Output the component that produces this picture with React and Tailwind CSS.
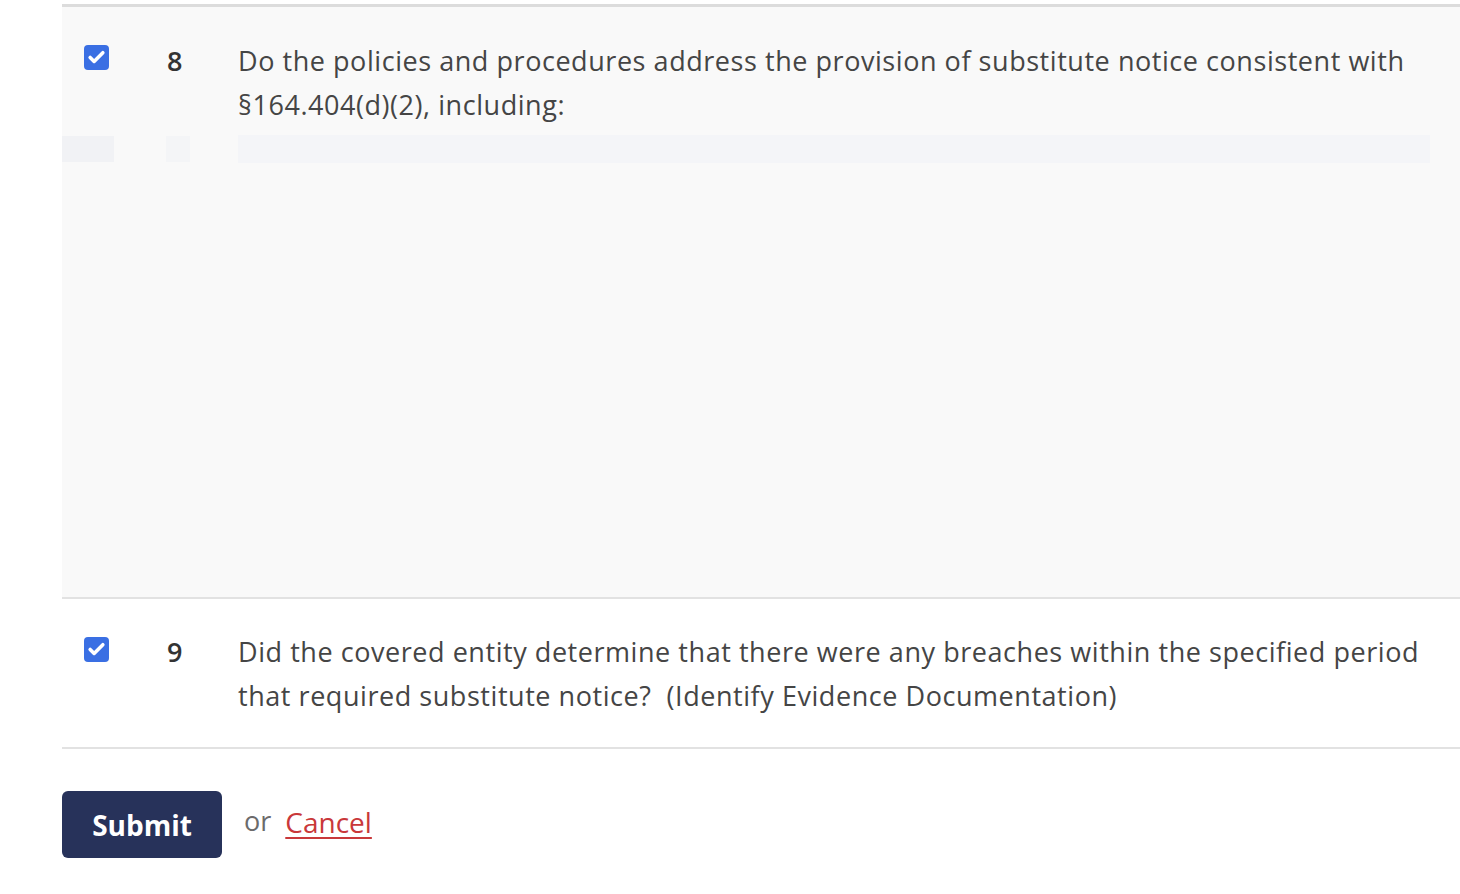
import { Check } from 'lucide-react'

const Box = () => (
  <span className="flex h-[25px] w-[25px] items-center justify-center rounded-[4px] bg-[#3a6fe3]">
    <Check size={19} strokeWidth={4.5} className="text-white" />
  </span>
)

const App = () => {
  return (
    <div className="min-h-[894px] w-[1460px] overflow-hidden bg-white font-['Open_Sans',sans-serif] text-[#454545]">
      <div className="pl-[62px] pt-[4px]">
        <div className="border-t-[3px] border-[#dcdcdc]" />

        {/* question 8 */}
        <div className="h-[592px] border-b-2 border-[#e2e2e2] bg-[#f9f9f9]">
          <div className="flex pt-[32px]">
            <div className="w-[60px] shrink-0 pl-[22px] pt-[6px]">
              <Box />
            </div>
            <div className="w-[116px] shrink-0 pl-[45px] text-[27px] font-semibold leading-[44px] text-[#333]">8</div>
            <p className="w-[1200px] text-[27px] leading-[44px] tracking-[0.55px]">
              Do the policies and procedures address the provision of substitute notice consistent with §164.404(d)(2), including:
            </p>
          </div>
          <div className="mt-[8px] flex items-center">
            <span className="h-[26px] w-[52px] bg-[#f1f2f5]" />
            <span className="ml-[52px] h-[26px] w-[24px] bg-[#f4f5f7]" />
            <span className="ml-[48px] h-[28px] w-[1192px] bg-[#f4f5f8]" />
          </div>
        </div>

        {/* question 9 */}
        <div className="flex border-b-2 border-[#e2e2e2] pb-[29px] pt-[31px]">
          <div className="w-[60px] shrink-0 pl-[22px] pt-[7px]">
            <Box />
          </div>
          <div className="w-[116px] shrink-0 pl-[45px] text-[27px] font-semibold leading-[44px] text-[#333]">9</div>
          <p className="w-[1200px] text-[27px] leading-[44px] tracking-[0.55px]">
            Did the covered entity determine that there were any breaches within the specified period that required substitute notice?&nbsp; (Identify Evidence Documentation)
          </p>
        </div>

        <div className="mt-[42px] flex items-center">
          <button className="h-[67px] w-[160px] rounded-[6px] bg-[#27325a] text-[28px] font-bold text-white">Submit</button>
          <span className="ml-[22px] -mt-[6px] text-[27px] text-[#6b6b6b]">or</span>
          <a href="#" className="ml-[14px] -mt-[6px] text-[28px] text-[#c9383a] underline underline-offset-4">Cancel</a>
        </div>
      </div>
    </div>
  )
}

export default App
